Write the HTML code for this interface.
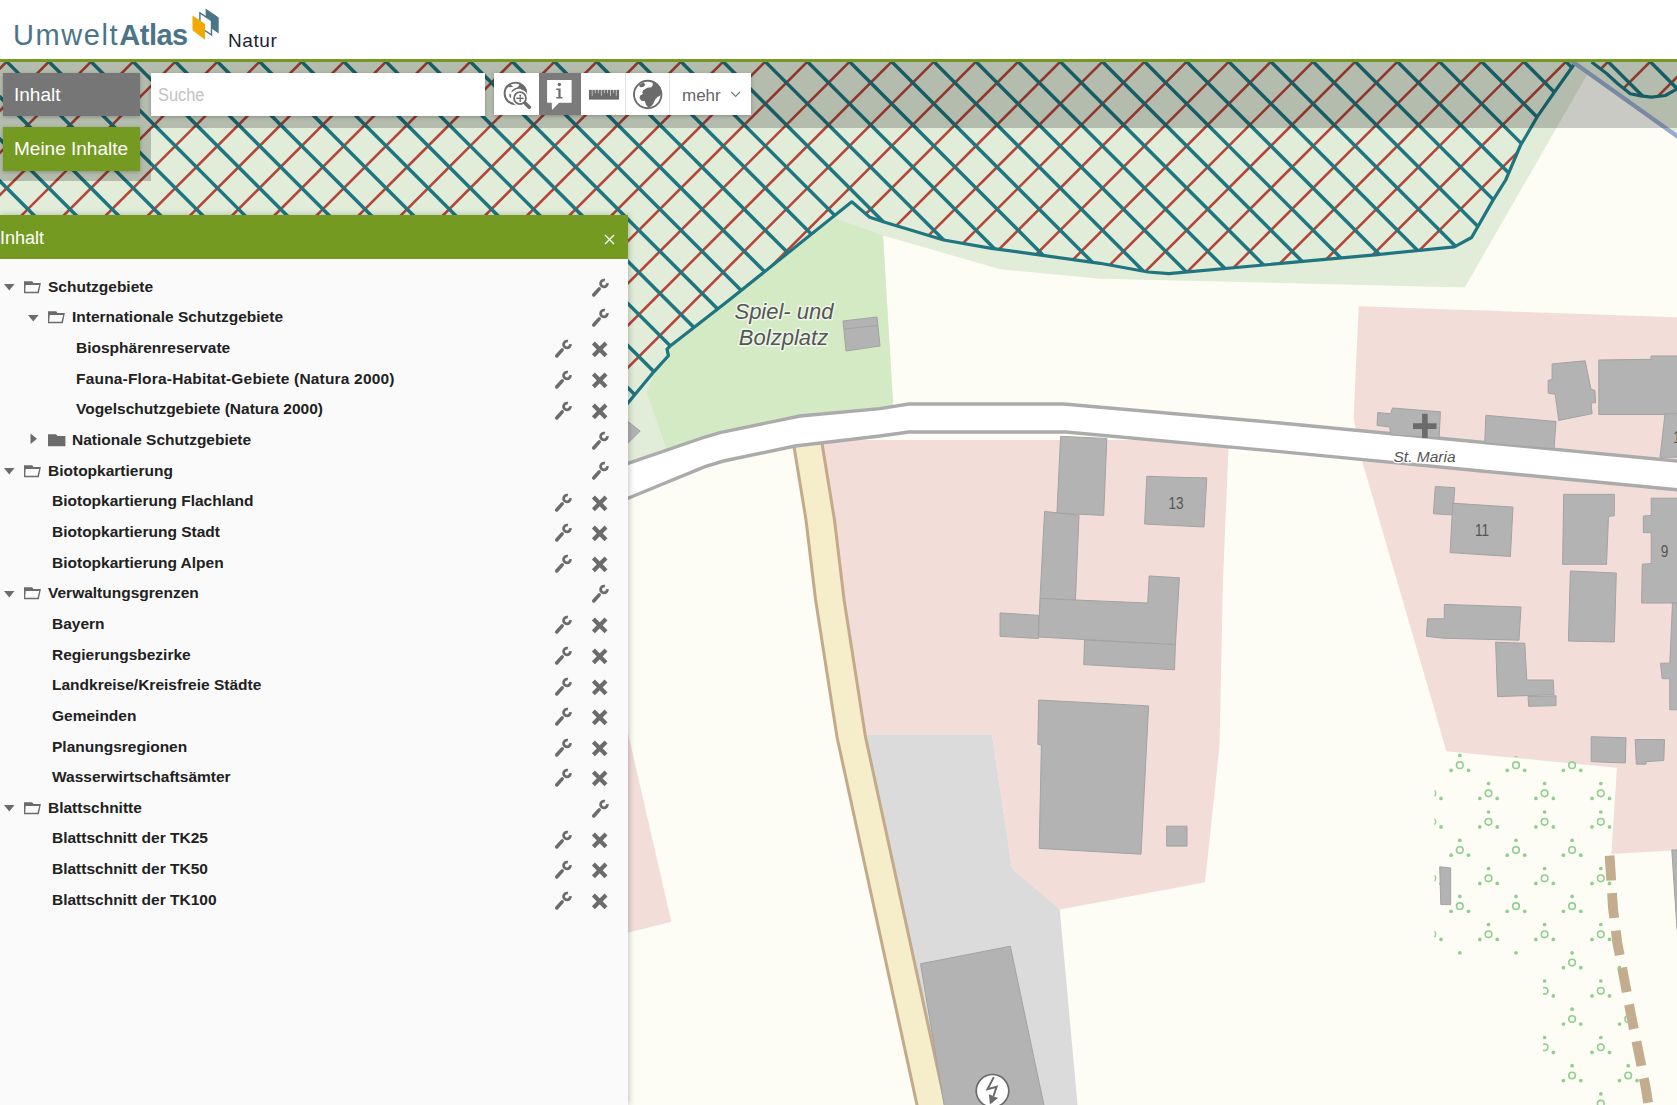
<!DOCTYPE html>
<html><head><meta charset="utf-8">
<style>
html,body{margin:0;padding:0;width:1677px;height:1105px;overflow:hidden;background:#fff;font-family:"Liberation Sans",sans-serif;}
#map{position:absolute;left:0;top:0;}
.tl{stroke:#1f7580;stroke-width:3.5;}
.rl{stroke:#b3453a;stroke-width:2.6;}
#hdr{position:absolute;left:0;top:0;width:1677px;height:59px;background:#fff;}
#hline{position:absolute;left:0;top:59px;width:1677px;height:3px;background:#759a22;}
#band{position:absolute;left:0;top:62px;width:1677px;height:66px;background:rgba(0,0,0,0.2);}
#lband{position:absolute;left:0;top:128px;width:151px;height:53px;background:rgba(0,0,0,0.2);}
.logo{position:absolute;left:13px;top:19px;font-size:29px;color:#4b7488;letter-spacing:0.3px;white-space:nowrap;}
.logo b{font-weight:bold;}
.natur{position:absolute;left:228px;top:29.5px;font-size:19px;letter-spacing:0.6px;color:#1b2434;}
.btn{position:absolute;left:3px;width:137px;height:43px;color:#fff;font-size:19px;box-shadow:0 1px 4px rgba(0,0,0,0.25);}
.btn span{position:absolute;left:11px;top:11px;}
#b1{top:73px;background:#767676;}
#b2{top:127px;height:44px;background:#759a22;}
#search{position:absolute;left:151px;top:73px;width:334px;height:43px;background:#fff;box-shadow:0 1px 4px rgba(0,0,0,0.25);}
#search span{position:absolute;left:7px;top:12px;font-size:18px;color:#c2c2c2;transform:scaleX(0.91);transform-origin:0 0;}
#tools{position:absolute;left:494px;top:73px;width:257px;height:42px;background:#fff;box-shadow:0 1px 4px rgba(0,0,0,0.25);}
.sep{position:absolute;top:0;width:1px;height:42px;background:#e4e4e4;}
#panel{position:absolute;left:0;top:215px;width:628px;height:890px;background:#fafafa;box-shadow:1px 0 6px rgba(0,0,0,0.24);}
#ph{position:absolute;left:0;top:0;width:628px;height:44px;background:#759a22;color:#fff;}
#ph .t{position:absolute;left:0;top:13px;font-size:18px;}
#ph .x{position:absolute;left:604px;top:19px;}
.row{position:absolute;left:0;height:30px;width:628px;}
.row .tx{position:absolute;top:6.8px;font-size:15.5px;font-weight:bold;color:#212121;white-space:nowrap;}
.ic{position:absolute;}
</style></head><body>
<svg id="map" width="1677" height="1105" viewBox="0 0 1677 1105">
<defs>
<clipPath id="c1"><polygon points="-20.0,40.0 1580.0,40.0 1575.8,62.0 1554.3,92.3 1537.3,116.6 1527.1,134.2 1520.4,145.5 1505.7,180.0 1492.3,201.4 1471.6,237.5 1454.4,246.8 1375.0,254.8 1168.8,273.7 1148.0,272.0 1100.0,263.3 991.4,248.3 943.7,240.0 884.0,222.0 869.7,217.3 851.8,201.8 729.2,300.0 669.9,346.3 667.0,349.2 668.4,355.7 654.0,371.6 628.2,402.7 560.0,480.0 -20.0,480.0"/><polygon points="1591.6,62.0 1606.6,73.5 1617.2,83.2 1630.3,93.8 1640.8,95.9 1651.4,97.1 1665.3,95.5 1677.0,88.9 1700.0,78.0 1700.0,40.0 1580.0,40.0"/></clipPath>
<clipPath id="cf"><polygon points="1434.5,749 1617,765 1611,854 1614,910 1622,967 1627,1019 1642,1080 1650,1110 1552,1110 1543,1050 1543,956 1434.5,956"/></clipPath>
</defs>
<rect x="0" y="0" width="1677" height="1105" fill="#fdfdf5"/>
<polygon points="-20.0,40.0 1700.0,40.0 1700.0,149.8 1588.9,71.6 1464.8,287.4 1100.0,278.8 1000.0,269.2 883.0,235.4 894.0,420.0 628.0,480.0 -20.0,520.0" fill="#e1edd9"/>
<polygon points="835.4,218.5 883.0,235.4 894.0,420.0 667.0,450.0 646.7,392.6 654.0,373.5 668.4,357.0 667.0,350.0 669.9,347.5 729.2,301.5 790.0,253.0" fill="#d3eac5"/>
<polygon points="822.0,440.0 1228.0,440.0 1228.5,448.0 1223.0,579.0 1219.5,746.6 1205.0,882.3 1060.4,909.4 1059.7,908.9 1012.0,868.6 992.0,734.8 866.0,734.8 837.0,737.0 815.6,600.0 806.0,520.0 793.6,444.0" fill="#f2ddd8"/>
<polygon points="1358.7,306.3 1677.0,317.2 1700.0,318.0 1700.0,850.0 1677.0,850.3 1611.4,854.0 1616.9,767.8 1446.3,751.3 1431.7,700.0 1363.3,465.0 1353.6,418.4" fill="#f2ddd8"/>
<polygon points="560.0,700.0 628.0,733.0 671.3,921.7 628.0,932.7 560.0,940.0" fill="#f2ddd8"/>
<polygon points="862.0,734.8 992.0,734.8 1012.0,868.6 1059.7,908.9 1078.0,1110.0 944.0,1110.0" fill="#dbdbdb"/>
<g clip-path="url(#c1)">
<line x1="-134.40" y1="-50" x2="-1384.40" y2="1200" class="rl"/>
<line x1="-92.26" y1="-50" x2="-1342.26" y2="1200" class="rl"/>
<line x1="-50.12" y1="-50" x2="-1300.12" y2="1200" class="rl"/>
<line x1="-7.98" y1="-50" x2="-1257.98" y2="1200" class="rl"/>
<line x1="34.16" y1="-50" x2="-1215.84" y2="1200" class="rl"/>
<line x1="76.30" y1="-50" x2="-1173.70" y2="1200" class="rl"/>
<line x1="118.44" y1="-50" x2="-1131.56" y2="1200" class="rl"/>
<line x1="160.58" y1="-50" x2="-1089.42" y2="1200" class="rl"/>
<line x1="202.72" y1="-50" x2="-1047.28" y2="1200" class="rl"/>
<line x1="244.86" y1="-50" x2="-1005.14" y2="1200" class="rl"/>
<line x1="287.00" y1="-50" x2="-963.00" y2="1200" class="rl"/>
<line x1="329.14" y1="-50" x2="-920.86" y2="1200" class="rl"/>
<line x1="371.28" y1="-50" x2="-878.72" y2="1200" class="rl"/>
<line x1="413.42" y1="-50" x2="-836.58" y2="1200" class="rl"/>
<line x1="455.56" y1="-50" x2="-794.44" y2="1200" class="rl"/>
<line x1="497.70" y1="-50" x2="-752.30" y2="1200" class="rl"/>
<line x1="539.84" y1="-50" x2="-710.16" y2="1200" class="rl"/>
<line x1="581.98" y1="-50" x2="-668.02" y2="1200" class="rl"/>
<line x1="624.12" y1="-50" x2="-625.88" y2="1200" class="rl"/>
<line x1="666.26" y1="-50" x2="-583.74" y2="1200" class="rl"/>
<line x1="708.40" y1="-50" x2="-541.60" y2="1200" class="rl"/>
<line x1="750.54" y1="-50" x2="-499.46" y2="1200" class="rl"/>
<line x1="792.68" y1="-50" x2="-457.32" y2="1200" class="rl"/>
<line x1="834.82" y1="-50" x2="-415.18" y2="1200" class="rl"/>
<line x1="876.96" y1="-50" x2="-373.04" y2="1200" class="rl"/>
<line x1="919.10" y1="-50" x2="-330.90" y2="1200" class="rl"/>
<line x1="961.24" y1="-50" x2="-288.76" y2="1200" class="rl"/>
<line x1="1003.38" y1="-50" x2="-246.62" y2="1200" class="rl"/>
<line x1="1045.52" y1="-50" x2="-204.48" y2="1200" class="rl"/>
<line x1="1087.66" y1="-50" x2="-162.34" y2="1200" class="rl"/>
<line x1="1129.80" y1="-50" x2="-120.20" y2="1200" class="rl"/>
<line x1="1171.94" y1="-50" x2="-78.06" y2="1200" class="rl"/>
<line x1="1214.08" y1="-50" x2="-35.92" y2="1200" class="rl"/>
<line x1="1256.22" y1="-50" x2="6.22" y2="1200" class="rl"/>
<line x1="1298.36" y1="-50" x2="48.36" y2="1200" class="rl"/>
<line x1="1340.50" y1="-50" x2="90.50" y2="1200" class="rl"/>
<line x1="1382.64" y1="-50" x2="132.64" y2="1200" class="rl"/>
<line x1="1424.78" y1="-50" x2="174.78" y2="1200" class="rl"/>
<line x1="1466.92" y1="-50" x2="216.92" y2="1200" class="rl"/>
<line x1="1509.06" y1="-50" x2="259.06" y2="1200" class="rl"/>
<line x1="1551.20" y1="-50" x2="301.20" y2="1200" class="rl"/>
<line x1="1593.34" y1="-50" x2="343.34" y2="1200" class="rl"/>
<line x1="1635.48" y1="-50" x2="385.48" y2="1200" class="rl"/>
<line x1="1677.62" y1="-50" x2="427.62" y2="1200" class="rl"/>
<line x1="1719.76" y1="-50" x2="469.76" y2="1200" class="rl"/>
<line x1="1761.90" y1="-50" x2="511.90" y2="1200" class="rl"/>
<line x1="1804.04" y1="-50" x2="554.04" y2="1200" class="rl"/>
<line x1="1846.18" y1="-50" x2="596.18" y2="1200" class="rl"/>
<line x1="1888.32" y1="-50" x2="638.32" y2="1200" class="rl"/>
<line x1="1930.46" y1="-50" x2="680.46" y2="1200" class="rl"/>
<line x1="1972.60" y1="-50" x2="722.60" y2="1200" class="rl"/>
<line x1="2014.74" y1="-50" x2="764.74" y2="1200" class="rl"/>
<line x1="2056.88" y1="-50" x2="806.88" y2="1200" class="rl"/>
<line x1="2099.02" y1="-50" x2="849.02" y2="1200" class="rl"/>
<line x1="2141.16" y1="-50" x2="891.16" y2="1200" class="rl"/>
<line x1="2183.30" y1="-50" x2="933.30" y2="1200" class="rl"/>
<line x1="2225.44" y1="-50" x2="975.44" y2="1200" class="rl"/>
<line x1="2267.58" y1="-50" x2="1017.58" y2="1200" class="rl"/>
<line x1="2309.72" y1="-50" x2="1059.72" y2="1200" class="rl"/>
<line x1="2351.86" y1="-50" x2="1101.86" y2="1200" class="rl"/>
<line x1="2394.00" y1="-50" x2="1144.00" y2="1200" class="rl"/>
<line x1="2436.14" y1="-50" x2="1186.14" y2="1200" class="rl"/>
<line x1="2478.28" y1="-50" x2="1228.28" y2="1200" class="rl"/>
<line x1="2520.42" y1="-50" x2="1270.42" y2="1200" class="rl"/>
<line x1="2562.56" y1="-50" x2="1312.56" y2="1200" class="rl"/>
<line x1="2604.70" y1="-50" x2="1354.70" y2="1200" class="rl"/>
<line x1="2646.84" y1="-50" x2="1396.84" y2="1200" class="rl"/>
<line x1="2688.98" y1="-50" x2="1438.98" y2="1200" class="rl"/>
<line x1="2731.12" y1="-50" x2="1481.12" y2="1200" class="rl"/>
<line x1="2773.26" y1="-50" x2="1523.26" y2="1200" class="rl"/>
<line x1="2815.40" y1="-50" x2="1565.40" y2="1200" class="rl"/>
<line x1="2857.54" y1="-50" x2="1607.54" y2="1200" class="rl"/>
<line x1="2899.68" y1="-50" x2="1649.68" y2="1200" class="rl"/>
<line x1="2941.82" y1="-50" x2="1691.82" y2="1200" class="rl"/>
<line x1="2983.96" y1="-50" x2="1733.96" y2="1200" class="rl"/>
<line x1="3026.10" y1="-50" x2="1776.10" y2="1200" class="rl"/>
<line x1="3068.24" y1="-50" x2="1818.24" y2="1200" class="rl"/>
<line x1="3110.38" y1="-50" x2="1860.38" y2="1200" class="rl"/>
<line x1="3152.52" y1="-50" x2="1902.52" y2="1200" class="rl"/>
<line x1="3194.66" y1="-50" x2="1944.66" y2="1200" class="rl"/>
<line x1="3236.80" y1="-50" x2="1986.80" y2="1200" class="rl"/>
<line x1="3278.94" y1="-50" x2="2028.94" y2="1200" class="rl"/>
<line x1="3321.08" y1="-50" x2="2071.08" y2="1200" class="rl"/>
<line x1="3363.22" y1="-50" x2="2113.22" y2="1200" class="rl"/>
<line x1="3405.36" y1="-50" x2="2155.36" y2="1200" class="rl"/>
<line x1="-1706.20" y1="-50" x2="-456.20" y2="1200" class="tl"/>
<line x1="-1664.06" y1="-50" x2="-414.06" y2="1200" class="tl"/>
<line x1="-1621.92" y1="-50" x2="-371.92" y2="1200" class="tl"/>
<line x1="-1579.78" y1="-50" x2="-329.78" y2="1200" class="tl"/>
<line x1="-1537.64" y1="-50" x2="-287.64" y2="1200" class="tl"/>
<line x1="-1495.50" y1="-50" x2="-245.50" y2="1200" class="tl"/>
<line x1="-1453.36" y1="-50" x2="-203.36" y2="1200" class="tl"/>
<line x1="-1411.22" y1="-50" x2="-161.22" y2="1200" class="tl"/>
<line x1="-1369.08" y1="-50" x2="-119.08" y2="1200" class="tl"/>
<line x1="-1326.94" y1="-50" x2="-76.94" y2="1200" class="tl"/>
<line x1="-1284.80" y1="-50" x2="-34.80" y2="1200" class="tl"/>
<line x1="-1242.66" y1="-50" x2="7.34" y2="1200" class="tl"/>
<line x1="-1200.52" y1="-50" x2="49.48" y2="1200" class="tl"/>
<line x1="-1158.38" y1="-50" x2="91.62" y2="1200" class="tl"/>
<line x1="-1116.24" y1="-50" x2="133.76" y2="1200" class="tl"/>
<line x1="-1074.10" y1="-50" x2="175.90" y2="1200" class="tl"/>
<line x1="-1031.96" y1="-50" x2="218.04" y2="1200" class="tl"/>
<line x1="-989.82" y1="-50" x2="260.18" y2="1200" class="tl"/>
<line x1="-947.68" y1="-50" x2="302.32" y2="1200" class="tl"/>
<line x1="-905.54" y1="-50" x2="344.46" y2="1200" class="tl"/>
<line x1="-863.40" y1="-50" x2="386.60" y2="1200" class="tl"/>
<line x1="-821.26" y1="-50" x2="428.74" y2="1200" class="tl"/>
<line x1="-779.12" y1="-50" x2="470.88" y2="1200" class="tl"/>
<line x1="-736.98" y1="-50" x2="513.02" y2="1200" class="tl"/>
<line x1="-694.84" y1="-50" x2="555.16" y2="1200" class="tl"/>
<line x1="-652.70" y1="-50" x2="597.30" y2="1200" class="tl"/>
<line x1="-610.56" y1="-50" x2="639.44" y2="1200" class="tl"/>
<line x1="-568.42" y1="-50" x2="681.58" y2="1200" class="tl"/>
<line x1="-526.28" y1="-50" x2="723.72" y2="1200" class="tl"/>
<line x1="-484.14" y1="-50" x2="765.86" y2="1200" class="tl"/>
<line x1="-442.00" y1="-50" x2="808.00" y2="1200" class="tl"/>
<line x1="-399.86" y1="-50" x2="850.14" y2="1200" class="tl"/>
<line x1="-357.72" y1="-50" x2="892.28" y2="1200" class="tl"/>
<line x1="-315.58" y1="-50" x2="934.42" y2="1200" class="tl"/>
<line x1="-273.44" y1="-50" x2="976.56" y2="1200" class="tl"/>
<line x1="-231.30" y1="-50" x2="1018.70" y2="1200" class="tl"/>
<line x1="-189.16" y1="-50" x2="1060.84" y2="1200" class="tl"/>
<line x1="-147.02" y1="-50" x2="1102.98" y2="1200" class="tl"/>
<line x1="-104.88" y1="-50" x2="1145.12" y2="1200" class="tl"/>
<line x1="-62.74" y1="-50" x2="1187.26" y2="1200" class="tl"/>
<line x1="-20.60" y1="-50" x2="1229.40" y2="1200" class="tl"/>
<line x1="21.54" y1="-50" x2="1271.54" y2="1200" class="tl"/>
<line x1="63.68" y1="-50" x2="1313.68" y2="1200" class="tl"/>
<line x1="105.82" y1="-50" x2="1355.82" y2="1200" class="tl"/>
<line x1="147.96" y1="-50" x2="1397.96" y2="1200" class="tl"/>
<line x1="190.10" y1="-50" x2="1440.10" y2="1200" class="tl"/>
<line x1="232.24" y1="-50" x2="1482.24" y2="1200" class="tl"/>
<line x1="274.38" y1="-50" x2="1524.38" y2="1200" class="tl"/>
<line x1="316.52" y1="-50" x2="1566.52" y2="1200" class="tl"/>
<line x1="358.66" y1="-50" x2="1608.66" y2="1200" class="tl"/>
<line x1="400.80" y1="-50" x2="1650.80" y2="1200" class="tl"/>
<line x1="442.94" y1="-50" x2="1692.94" y2="1200" class="tl"/>
<line x1="485.08" y1="-50" x2="1735.08" y2="1200" class="tl"/>
<line x1="527.22" y1="-50" x2="1777.22" y2="1200" class="tl"/>
<line x1="569.36" y1="-50" x2="1819.36" y2="1200" class="tl"/>
<line x1="611.50" y1="-50" x2="1861.50" y2="1200" class="tl"/>
<line x1="653.64" y1="-50" x2="1903.64" y2="1200" class="tl"/>
<line x1="695.78" y1="-50" x2="1945.78" y2="1200" class="tl"/>
<line x1="737.92" y1="-50" x2="1987.92" y2="1200" class="tl"/>
<line x1="780.06" y1="-50" x2="2030.06" y2="1200" class="tl"/>
<line x1="822.20" y1="-50" x2="2072.20" y2="1200" class="tl"/>
<line x1="864.34" y1="-50" x2="2114.34" y2="1200" class="tl"/>
<line x1="906.48" y1="-50" x2="2156.48" y2="1200" class="tl"/>
<line x1="948.62" y1="-50" x2="2198.62" y2="1200" class="tl"/>
<line x1="990.76" y1="-50" x2="2240.76" y2="1200" class="tl"/>
<line x1="1032.90" y1="-50" x2="2282.90" y2="1200" class="tl"/>
<line x1="1075.04" y1="-50" x2="2325.04" y2="1200" class="tl"/>
<line x1="1117.18" y1="-50" x2="2367.18" y2="1200" class="tl"/>
<line x1="1159.32" y1="-50" x2="2409.32" y2="1200" class="tl"/>
<line x1="1201.46" y1="-50" x2="2451.46" y2="1200" class="tl"/>
<line x1="1243.60" y1="-50" x2="2493.60" y2="1200" class="tl"/>
<line x1="1285.74" y1="-50" x2="2535.74" y2="1200" class="tl"/>
<line x1="1327.88" y1="-50" x2="2577.88" y2="1200" class="tl"/>
<line x1="1370.02" y1="-50" x2="2620.02" y2="1200" class="tl"/>
<line x1="1412.16" y1="-50" x2="2662.16" y2="1200" class="tl"/>
<line x1="1454.30" y1="-50" x2="2704.30" y2="1200" class="tl"/>
<line x1="1496.44" y1="-50" x2="2746.44" y2="1200" class="tl"/>
<line x1="1538.58" y1="-50" x2="2788.58" y2="1200" class="tl"/>
<line x1="1580.72" y1="-50" x2="2830.72" y2="1200" class="tl"/>
<line x1="1622.86" y1="-50" x2="2872.86" y2="1200" class="tl"/>
<line x1="1665.00" y1="-50" x2="2915.00" y2="1200" class="tl"/>
<line x1="1707.14" y1="-50" x2="2957.14" y2="1200" class="tl"/>
<line x1="1749.28" y1="-50" x2="2999.28" y2="1200" class="tl"/>
<line x1="1791.42" y1="-50" x2="3041.42" y2="1200" class="tl"/>
<line x1="1833.56" y1="-50" x2="3083.56" y2="1200" class="tl"/>
<line x1="1875.70" y1="-50" x2="3125.70" y2="1200" class="tl"/>
<line x1="1917.84" y1="-50" x2="3167.84" y2="1200" class="tl"/>
<line x1="1959.98" y1="-50" x2="3209.98" y2="1200" class="tl"/>
<line x1="2002.12" y1="-50" x2="3252.12" y2="1200" class="tl"/>
<line x1="2044.26" y1="-50" x2="3294.26" y2="1200" class="tl"/>
<line x1="2086.40" y1="-50" x2="3336.40" y2="1200" class="tl"/>
<line x1="2128.54" y1="-50" x2="3378.54" y2="1200" class="tl"/>
<line x1="2170.68" y1="-50" x2="3420.68" y2="1200" class="tl"/>
<line x1="2212.82" y1="-50" x2="3462.82" y2="1200" class="tl"/>
<line x1="2254.96" y1="-50" x2="3504.96" y2="1200" class="tl"/>
<line x1="2297.10" y1="-50" x2="3547.10" y2="1200" class="tl"/>
<line x1="2339.24" y1="-50" x2="3589.24" y2="1200" class="tl"/>
<line x1="2381.38" y1="-50" x2="3631.38" y2="1200" class="tl"/>
<line x1="2423.52" y1="-50" x2="3673.52" y2="1200" class="tl"/>
<line x1="2465.66" y1="-50" x2="3715.66" y2="1200" class="tl"/>
</g>
<polyline points="1575.8,62.0 1554.3,92.3 1537.3,116.6 1527.1,134.2 1520.4,145.5 1505.7,180.0 1492.3,201.4 1471.6,237.5 1454.4,246.8 1375.0,254.8 1168.8,273.7 1148.0,272.0 1100.0,263.3 991.4,248.3 943.7,240.0 884.0,222.0 869.7,217.3 851.8,201.8 729.2,300.0 669.9,346.3 667.0,349.2 668.4,355.7 654.0,371.6 628.2,402.7 560.0,480.0" fill="none" stroke="#1f7580" stroke-width="3.2" stroke-linejoin="round"/>
<polyline points="1591.6,62.0 1606.6,73.5 1617.2,83.2 1630.3,93.8 1640.8,95.9 1651.4,97.1 1665.3,95.5 1677.0,88.9" fill="none" stroke="#1f7580" stroke-width="3.2" stroke-linejoin="round"/>
<line x1="1565" y1="56.3" x2="1700" y2="152.5" stroke="#98abcc" stroke-width="4.3"/>
<polyline points="1609.6,855.6 1610.4,867.6 1613,908.3 1617.3,942.7 1624.2,978.8 1631.2,1016 1638.6,1052 1646,1089.2 1650,1115" fill="none" stroke="#c4ad8f" stroke-width="9.8" stroke-dasharray="25 12.6"/>
<g clip-path="url(#cf)" fill="none" stroke="#8fcf8f">
<circle cx="1459.8" cy="765.2" r="3.3" stroke-width="1.6"/>
<circle cx="1459.8" cy="755.4" r="1.85" fill="#8fcf8f" stroke="none"/>
<circle cx="1451.1" cy="770.3" r="1.85" fill="#8fcf8f" stroke="none"/>
<circle cx="1468.5" cy="770.3" r="1.85" fill="#8fcf8f" stroke="none"/>
<circle cx="1516.0" cy="765.2" r="3.3" stroke-width="1.6"/>
<circle cx="1516.0" cy="755.4" r="1.85" fill="#8fcf8f" stroke="none"/>
<circle cx="1507.2" cy="770.3" r="1.85" fill="#8fcf8f" stroke="none"/>
<circle cx="1524.7" cy="770.3" r="1.85" fill="#8fcf8f" stroke="none"/>
<circle cx="1572.1" cy="765.2" r="3.3" stroke-width="1.6"/>
<circle cx="1572.1" cy="755.4" r="1.85" fill="#8fcf8f" stroke="none"/>
<circle cx="1563.4" cy="770.3" r="1.85" fill="#8fcf8f" stroke="none"/>
<circle cx="1580.8" cy="770.3" r="1.85" fill="#8fcf8f" stroke="none"/>
<circle cx="1628.2" cy="765.2" r="3.3" stroke-width="1.6"/>
<circle cx="1628.2" cy="755.4" r="1.85" fill="#8fcf8f" stroke="none"/>
<circle cx="1619.5" cy="770.3" r="1.85" fill="#8fcf8f" stroke="none"/>
<circle cx="1637.0" cy="770.3" r="1.85" fill="#8fcf8f" stroke="none"/>
<circle cx="1684.4" cy="765.2" r="3.3" stroke-width="1.6"/>
<circle cx="1684.4" cy="755.4" r="1.85" fill="#8fcf8f" stroke="none"/>
<circle cx="1675.7" cy="770.3" r="1.85" fill="#8fcf8f" stroke="none"/>
<circle cx="1693.1" cy="770.3" r="1.85" fill="#8fcf8f" stroke="none"/>
<circle cx="1432.3" cy="793.3" r="3.3" stroke-width="1.6"/>
<circle cx="1432.3" cy="783.5" r="1.85" fill="#8fcf8f" stroke="none"/>
<circle cx="1423.6" cy="798.4" r="1.85" fill="#8fcf8f" stroke="none"/>
<circle cx="1441.0" cy="798.4" r="1.85" fill="#8fcf8f" stroke="none"/>
<circle cx="1488.5" cy="793.3" r="3.3" stroke-width="1.6"/>
<circle cx="1488.5" cy="783.5" r="1.85" fill="#8fcf8f" stroke="none"/>
<circle cx="1479.8" cy="798.4" r="1.85" fill="#8fcf8f" stroke="none"/>
<circle cx="1497.2" cy="798.4" r="1.85" fill="#8fcf8f" stroke="none"/>
<circle cx="1544.6" cy="793.3" r="3.3" stroke-width="1.6"/>
<circle cx="1544.6" cy="783.5" r="1.85" fill="#8fcf8f" stroke="none"/>
<circle cx="1535.9" cy="798.4" r="1.85" fill="#8fcf8f" stroke="none"/>
<circle cx="1553.3" cy="798.4" r="1.85" fill="#8fcf8f" stroke="none"/>
<circle cx="1600.8" cy="793.3" r="3.3" stroke-width="1.6"/>
<circle cx="1600.8" cy="783.5" r="1.85" fill="#8fcf8f" stroke="none"/>
<circle cx="1592.0" cy="798.4" r="1.85" fill="#8fcf8f" stroke="none"/>
<circle cx="1609.5" cy="798.4" r="1.85" fill="#8fcf8f" stroke="none"/>
<circle cx="1656.9" cy="793.3" r="3.3" stroke-width="1.6"/>
<circle cx="1656.9" cy="783.5" r="1.85" fill="#8fcf8f" stroke="none"/>
<circle cx="1648.2" cy="798.4" r="1.85" fill="#8fcf8f" stroke="none"/>
<circle cx="1665.6" cy="798.4" r="1.85" fill="#8fcf8f" stroke="none"/>
<circle cx="1432.3" cy="821.8" r="3.3" stroke-width="1.6"/>
<circle cx="1432.3" cy="812.0" r="1.85" fill="#8fcf8f" stroke="none"/>
<circle cx="1423.6" cy="826.9" r="1.85" fill="#8fcf8f" stroke="none"/>
<circle cx="1441.0" cy="826.9" r="1.85" fill="#8fcf8f" stroke="none"/>
<circle cx="1488.5" cy="821.8" r="3.3" stroke-width="1.6"/>
<circle cx="1488.5" cy="812.0" r="1.85" fill="#8fcf8f" stroke="none"/>
<circle cx="1479.8" cy="826.9" r="1.85" fill="#8fcf8f" stroke="none"/>
<circle cx="1497.2" cy="826.9" r="1.85" fill="#8fcf8f" stroke="none"/>
<circle cx="1544.6" cy="821.8" r="3.3" stroke-width="1.6"/>
<circle cx="1544.6" cy="812.0" r="1.85" fill="#8fcf8f" stroke="none"/>
<circle cx="1535.9" cy="826.9" r="1.85" fill="#8fcf8f" stroke="none"/>
<circle cx="1553.3" cy="826.9" r="1.85" fill="#8fcf8f" stroke="none"/>
<circle cx="1600.8" cy="821.8" r="3.3" stroke-width="1.6"/>
<circle cx="1600.8" cy="812.0" r="1.85" fill="#8fcf8f" stroke="none"/>
<circle cx="1592.0" cy="826.9" r="1.85" fill="#8fcf8f" stroke="none"/>
<circle cx="1609.5" cy="826.9" r="1.85" fill="#8fcf8f" stroke="none"/>
<circle cx="1656.9" cy="821.8" r="3.3" stroke-width="1.6"/>
<circle cx="1656.9" cy="812.0" r="1.85" fill="#8fcf8f" stroke="none"/>
<circle cx="1648.2" cy="826.9" r="1.85" fill="#8fcf8f" stroke="none"/>
<circle cx="1665.6" cy="826.9" r="1.85" fill="#8fcf8f" stroke="none"/>
<circle cx="1459.8" cy="850.1" r="3.3" stroke-width="1.6"/>
<circle cx="1459.8" cy="840.3" r="1.85" fill="#8fcf8f" stroke="none"/>
<circle cx="1451.1" cy="855.2" r="1.85" fill="#8fcf8f" stroke="none"/>
<circle cx="1468.5" cy="855.2" r="1.85" fill="#8fcf8f" stroke="none"/>
<circle cx="1516.0" cy="850.1" r="3.3" stroke-width="1.6"/>
<circle cx="1516.0" cy="840.3" r="1.85" fill="#8fcf8f" stroke="none"/>
<circle cx="1507.2" cy="855.2" r="1.85" fill="#8fcf8f" stroke="none"/>
<circle cx="1524.7" cy="855.2" r="1.85" fill="#8fcf8f" stroke="none"/>
<circle cx="1572.1" cy="850.1" r="3.3" stroke-width="1.6"/>
<circle cx="1572.1" cy="840.3" r="1.85" fill="#8fcf8f" stroke="none"/>
<circle cx="1563.4" cy="855.2" r="1.85" fill="#8fcf8f" stroke="none"/>
<circle cx="1580.8" cy="855.2" r="1.85" fill="#8fcf8f" stroke="none"/>
<circle cx="1628.2" cy="850.1" r="3.3" stroke-width="1.6"/>
<circle cx="1628.2" cy="840.3" r="1.85" fill="#8fcf8f" stroke="none"/>
<circle cx="1619.5" cy="855.2" r="1.85" fill="#8fcf8f" stroke="none"/>
<circle cx="1637.0" cy="855.2" r="1.85" fill="#8fcf8f" stroke="none"/>
<circle cx="1684.4" cy="850.1" r="3.3" stroke-width="1.6"/>
<circle cx="1684.4" cy="840.3" r="1.85" fill="#8fcf8f" stroke="none"/>
<circle cx="1675.7" cy="855.2" r="1.85" fill="#8fcf8f" stroke="none"/>
<circle cx="1693.1" cy="855.2" r="1.85" fill="#8fcf8f" stroke="none"/>
<circle cx="1432.3" cy="878.3" r="3.3" stroke-width="1.6"/>
<circle cx="1432.3" cy="868.5" r="1.85" fill="#8fcf8f" stroke="none"/>
<circle cx="1423.6" cy="883.4" r="1.85" fill="#8fcf8f" stroke="none"/>
<circle cx="1441.0" cy="883.4" r="1.85" fill="#8fcf8f" stroke="none"/>
<circle cx="1488.5" cy="878.3" r="3.3" stroke-width="1.6"/>
<circle cx="1488.5" cy="868.5" r="1.85" fill="#8fcf8f" stroke="none"/>
<circle cx="1479.8" cy="883.4" r="1.85" fill="#8fcf8f" stroke="none"/>
<circle cx="1497.2" cy="883.4" r="1.85" fill="#8fcf8f" stroke="none"/>
<circle cx="1544.6" cy="878.3" r="3.3" stroke-width="1.6"/>
<circle cx="1544.6" cy="868.5" r="1.85" fill="#8fcf8f" stroke="none"/>
<circle cx="1535.9" cy="883.4" r="1.85" fill="#8fcf8f" stroke="none"/>
<circle cx="1553.3" cy="883.4" r="1.85" fill="#8fcf8f" stroke="none"/>
<circle cx="1600.8" cy="878.3" r="3.3" stroke-width="1.6"/>
<circle cx="1600.8" cy="868.5" r="1.85" fill="#8fcf8f" stroke="none"/>
<circle cx="1592.0" cy="883.4" r="1.85" fill="#8fcf8f" stroke="none"/>
<circle cx="1609.5" cy="883.4" r="1.85" fill="#8fcf8f" stroke="none"/>
<circle cx="1656.9" cy="878.3" r="3.3" stroke-width="1.6"/>
<circle cx="1656.9" cy="868.5" r="1.85" fill="#8fcf8f" stroke="none"/>
<circle cx="1648.2" cy="883.4" r="1.85" fill="#8fcf8f" stroke="none"/>
<circle cx="1665.6" cy="883.4" r="1.85" fill="#8fcf8f" stroke="none"/>
<circle cx="1459.8" cy="906.2" r="3.3" stroke-width="1.6"/>
<circle cx="1459.8" cy="896.4" r="1.85" fill="#8fcf8f" stroke="none"/>
<circle cx="1451.1" cy="911.3" r="1.85" fill="#8fcf8f" stroke="none"/>
<circle cx="1468.5" cy="911.3" r="1.85" fill="#8fcf8f" stroke="none"/>
<circle cx="1516.0" cy="906.2" r="3.3" stroke-width="1.6"/>
<circle cx="1516.0" cy="896.4" r="1.85" fill="#8fcf8f" stroke="none"/>
<circle cx="1507.2" cy="911.3" r="1.85" fill="#8fcf8f" stroke="none"/>
<circle cx="1524.7" cy="911.3" r="1.85" fill="#8fcf8f" stroke="none"/>
<circle cx="1572.1" cy="906.2" r="3.3" stroke-width="1.6"/>
<circle cx="1572.1" cy="896.4" r="1.85" fill="#8fcf8f" stroke="none"/>
<circle cx="1563.4" cy="911.3" r="1.85" fill="#8fcf8f" stroke="none"/>
<circle cx="1580.8" cy="911.3" r="1.85" fill="#8fcf8f" stroke="none"/>
<circle cx="1628.2" cy="906.2" r="3.3" stroke-width="1.6"/>
<circle cx="1628.2" cy="896.4" r="1.85" fill="#8fcf8f" stroke="none"/>
<circle cx="1619.5" cy="911.3" r="1.85" fill="#8fcf8f" stroke="none"/>
<circle cx="1637.0" cy="911.3" r="1.85" fill="#8fcf8f" stroke="none"/>
<circle cx="1684.4" cy="906.2" r="3.3" stroke-width="1.6"/>
<circle cx="1684.4" cy="896.4" r="1.85" fill="#8fcf8f" stroke="none"/>
<circle cx="1675.7" cy="911.3" r="1.85" fill="#8fcf8f" stroke="none"/>
<circle cx="1693.1" cy="911.3" r="1.85" fill="#8fcf8f" stroke="none"/>
<circle cx="1432.3" cy="934.3" r="3.3" stroke-width="1.6"/>
<circle cx="1432.3" cy="924.5" r="1.85" fill="#8fcf8f" stroke="none"/>
<circle cx="1423.6" cy="939.4" r="1.85" fill="#8fcf8f" stroke="none"/>
<circle cx="1441.0" cy="939.4" r="1.85" fill="#8fcf8f" stroke="none"/>
<circle cx="1488.5" cy="934.3" r="3.3" stroke-width="1.6"/>
<circle cx="1488.5" cy="924.5" r="1.85" fill="#8fcf8f" stroke="none"/>
<circle cx="1479.8" cy="939.4" r="1.85" fill="#8fcf8f" stroke="none"/>
<circle cx="1497.2" cy="939.4" r="1.85" fill="#8fcf8f" stroke="none"/>
<circle cx="1544.6" cy="934.3" r="3.3" stroke-width="1.6"/>
<circle cx="1544.6" cy="924.5" r="1.85" fill="#8fcf8f" stroke="none"/>
<circle cx="1535.9" cy="939.4" r="1.85" fill="#8fcf8f" stroke="none"/>
<circle cx="1553.3" cy="939.4" r="1.85" fill="#8fcf8f" stroke="none"/>
<circle cx="1600.8" cy="934.3" r="3.3" stroke-width="1.6"/>
<circle cx="1600.8" cy="924.5" r="1.85" fill="#8fcf8f" stroke="none"/>
<circle cx="1592.0" cy="939.4" r="1.85" fill="#8fcf8f" stroke="none"/>
<circle cx="1609.5" cy="939.4" r="1.85" fill="#8fcf8f" stroke="none"/>
<circle cx="1656.9" cy="934.3" r="3.3" stroke-width="1.6"/>
<circle cx="1656.9" cy="924.5" r="1.85" fill="#8fcf8f" stroke="none"/>
<circle cx="1648.2" cy="939.4" r="1.85" fill="#8fcf8f" stroke="none"/>
<circle cx="1665.6" cy="939.4" r="1.85" fill="#8fcf8f" stroke="none"/>
<circle cx="1459.8" cy="962.6" r="3.3" stroke-width="1.6"/>
<circle cx="1459.8" cy="952.8" r="1.85" fill="#8fcf8f" stroke="none"/>
<circle cx="1451.1" cy="967.7" r="1.85" fill="#8fcf8f" stroke="none"/>
<circle cx="1468.5" cy="967.7" r="1.85" fill="#8fcf8f" stroke="none"/>
<circle cx="1516.0" cy="962.6" r="3.3" stroke-width="1.6"/>
<circle cx="1516.0" cy="952.8" r="1.85" fill="#8fcf8f" stroke="none"/>
<circle cx="1507.2" cy="967.7" r="1.85" fill="#8fcf8f" stroke="none"/>
<circle cx="1524.7" cy="967.7" r="1.85" fill="#8fcf8f" stroke="none"/>
<circle cx="1572.1" cy="962.6" r="3.3" stroke-width="1.6"/>
<circle cx="1572.1" cy="952.8" r="1.85" fill="#8fcf8f" stroke="none"/>
<circle cx="1563.4" cy="967.7" r="1.85" fill="#8fcf8f" stroke="none"/>
<circle cx="1580.8" cy="967.7" r="1.85" fill="#8fcf8f" stroke="none"/>
<circle cx="1628.2" cy="962.6" r="3.3" stroke-width="1.6"/>
<circle cx="1628.2" cy="952.8" r="1.85" fill="#8fcf8f" stroke="none"/>
<circle cx="1619.5" cy="967.7" r="1.85" fill="#8fcf8f" stroke="none"/>
<circle cx="1637.0" cy="967.7" r="1.85" fill="#8fcf8f" stroke="none"/>
<circle cx="1684.4" cy="962.6" r="3.3" stroke-width="1.6"/>
<circle cx="1684.4" cy="952.8" r="1.85" fill="#8fcf8f" stroke="none"/>
<circle cx="1675.7" cy="967.7" r="1.85" fill="#8fcf8f" stroke="none"/>
<circle cx="1693.1" cy="967.7" r="1.85" fill="#8fcf8f" stroke="none"/>
<circle cx="1432.3" cy="990.8" r="3.3" stroke-width="1.6"/>
<circle cx="1432.3" cy="981.0" r="1.85" fill="#8fcf8f" stroke="none"/>
<circle cx="1423.6" cy="995.9" r="1.85" fill="#8fcf8f" stroke="none"/>
<circle cx="1441.0" cy="995.9" r="1.85" fill="#8fcf8f" stroke="none"/>
<circle cx="1488.5" cy="990.8" r="3.3" stroke-width="1.6"/>
<circle cx="1488.5" cy="981.0" r="1.85" fill="#8fcf8f" stroke="none"/>
<circle cx="1479.8" cy="995.9" r="1.85" fill="#8fcf8f" stroke="none"/>
<circle cx="1497.2" cy="995.9" r="1.85" fill="#8fcf8f" stroke="none"/>
<circle cx="1544.6" cy="990.8" r="3.3" stroke-width="1.6"/>
<circle cx="1544.6" cy="981.0" r="1.85" fill="#8fcf8f" stroke="none"/>
<circle cx="1535.9" cy="995.9" r="1.85" fill="#8fcf8f" stroke="none"/>
<circle cx="1553.3" cy="995.9" r="1.85" fill="#8fcf8f" stroke="none"/>
<circle cx="1600.8" cy="990.8" r="3.3" stroke-width="1.6"/>
<circle cx="1600.8" cy="981.0" r="1.85" fill="#8fcf8f" stroke="none"/>
<circle cx="1592.0" cy="995.9" r="1.85" fill="#8fcf8f" stroke="none"/>
<circle cx="1609.5" cy="995.9" r="1.85" fill="#8fcf8f" stroke="none"/>
<circle cx="1656.9" cy="990.8" r="3.3" stroke-width="1.6"/>
<circle cx="1656.9" cy="981.0" r="1.85" fill="#8fcf8f" stroke="none"/>
<circle cx="1648.2" cy="995.9" r="1.85" fill="#8fcf8f" stroke="none"/>
<circle cx="1665.6" cy="995.9" r="1.85" fill="#8fcf8f" stroke="none"/>
<circle cx="1459.8" cy="1019.0" r="3.3" stroke-width="1.6"/>
<circle cx="1459.8" cy="1009.2" r="1.85" fill="#8fcf8f" stroke="none"/>
<circle cx="1451.1" cy="1024.1" r="1.85" fill="#8fcf8f" stroke="none"/>
<circle cx="1468.5" cy="1024.1" r="1.85" fill="#8fcf8f" stroke="none"/>
<circle cx="1516.0" cy="1019.0" r="3.3" stroke-width="1.6"/>
<circle cx="1516.0" cy="1009.2" r="1.85" fill="#8fcf8f" stroke="none"/>
<circle cx="1507.2" cy="1024.1" r="1.85" fill="#8fcf8f" stroke="none"/>
<circle cx="1524.7" cy="1024.1" r="1.85" fill="#8fcf8f" stroke="none"/>
<circle cx="1572.1" cy="1019.0" r="3.3" stroke-width="1.6"/>
<circle cx="1572.1" cy="1009.2" r="1.85" fill="#8fcf8f" stroke="none"/>
<circle cx="1563.4" cy="1024.1" r="1.85" fill="#8fcf8f" stroke="none"/>
<circle cx="1580.8" cy="1024.1" r="1.85" fill="#8fcf8f" stroke="none"/>
<circle cx="1628.2" cy="1019.0" r="3.3" stroke-width="1.6"/>
<circle cx="1628.2" cy="1009.2" r="1.85" fill="#8fcf8f" stroke="none"/>
<circle cx="1619.5" cy="1024.1" r="1.85" fill="#8fcf8f" stroke="none"/>
<circle cx="1637.0" cy="1024.1" r="1.85" fill="#8fcf8f" stroke="none"/>
<circle cx="1684.4" cy="1019.0" r="3.3" stroke-width="1.6"/>
<circle cx="1684.4" cy="1009.2" r="1.85" fill="#8fcf8f" stroke="none"/>
<circle cx="1675.7" cy="1024.1" r="1.85" fill="#8fcf8f" stroke="none"/>
<circle cx="1693.1" cy="1024.1" r="1.85" fill="#8fcf8f" stroke="none"/>
<circle cx="1432.3" cy="1047.3" r="3.3" stroke-width="1.6"/>
<circle cx="1432.3" cy="1037.5" r="1.85" fill="#8fcf8f" stroke="none"/>
<circle cx="1423.6" cy="1052.4" r="1.85" fill="#8fcf8f" stroke="none"/>
<circle cx="1441.0" cy="1052.4" r="1.85" fill="#8fcf8f" stroke="none"/>
<circle cx="1488.5" cy="1047.3" r="3.3" stroke-width="1.6"/>
<circle cx="1488.5" cy="1037.5" r="1.85" fill="#8fcf8f" stroke="none"/>
<circle cx="1479.8" cy="1052.4" r="1.85" fill="#8fcf8f" stroke="none"/>
<circle cx="1497.2" cy="1052.4" r="1.85" fill="#8fcf8f" stroke="none"/>
<circle cx="1544.6" cy="1047.3" r="3.3" stroke-width="1.6"/>
<circle cx="1544.6" cy="1037.5" r="1.85" fill="#8fcf8f" stroke="none"/>
<circle cx="1535.9" cy="1052.4" r="1.85" fill="#8fcf8f" stroke="none"/>
<circle cx="1553.3" cy="1052.4" r="1.85" fill="#8fcf8f" stroke="none"/>
<circle cx="1600.8" cy="1047.3" r="3.3" stroke-width="1.6"/>
<circle cx="1600.8" cy="1037.5" r="1.85" fill="#8fcf8f" stroke="none"/>
<circle cx="1592.0" cy="1052.4" r="1.85" fill="#8fcf8f" stroke="none"/>
<circle cx="1609.5" cy="1052.4" r="1.85" fill="#8fcf8f" stroke="none"/>
<circle cx="1656.9" cy="1047.3" r="3.3" stroke-width="1.6"/>
<circle cx="1656.9" cy="1037.5" r="1.85" fill="#8fcf8f" stroke="none"/>
<circle cx="1648.2" cy="1052.4" r="1.85" fill="#8fcf8f" stroke="none"/>
<circle cx="1665.6" cy="1052.4" r="1.85" fill="#8fcf8f" stroke="none"/>
<circle cx="1459.8" cy="1075.5" r="3.3" stroke-width="1.6"/>
<circle cx="1459.8" cy="1065.7" r="1.85" fill="#8fcf8f" stroke="none"/>
<circle cx="1451.1" cy="1080.6" r="1.85" fill="#8fcf8f" stroke="none"/>
<circle cx="1468.5" cy="1080.6" r="1.85" fill="#8fcf8f" stroke="none"/>
<circle cx="1516.0" cy="1075.5" r="3.3" stroke-width="1.6"/>
<circle cx="1516.0" cy="1065.7" r="1.85" fill="#8fcf8f" stroke="none"/>
<circle cx="1507.2" cy="1080.6" r="1.85" fill="#8fcf8f" stroke="none"/>
<circle cx="1524.7" cy="1080.6" r="1.85" fill="#8fcf8f" stroke="none"/>
<circle cx="1572.1" cy="1075.5" r="3.3" stroke-width="1.6"/>
<circle cx="1572.1" cy="1065.7" r="1.85" fill="#8fcf8f" stroke="none"/>
<circle cx="1563.4" cy="1080.6" r="1.85" fill="#8fcf8f" stroke="none"/>
<circle cx="1580.8" cy="1080.6" r="1.85" fill="#8fcf8f" stroke="none"/>
<circle cx="1628.2" cy="1075.5" r="3.3" stroke-width="1.6"/>
<circle cx="1628.2" cy="1065.7" r="1.85" fill="#8fcf8f" stroke="none"/>
<circle cx="1619.5" cy="1080.6" r="1.85" fill="#8fcf8f" stroke="none"/>
<circle cx="1637.0" cy="1080.6" r="1.85" fill="#8fcf8f" stroke="none"/>
<circle cx="1684.4" cy="1075.5" r="3.3" stroke-width="1.6"/>
<circle cx="1684.4" cy="1065.7" r="1.85" fill="#8fcf8f" stroke="none"/>
<circle cx="1675.7" cy="1080.6" r="1.85" fill="#8fcf8f" stroke="none"/>
<circle cx="1693.1" cy="1080.6" r="1.85" fill="#8fcf8f" stroke="none"/>
<circle cx="1432.3" cy="1103.7" r="3.3" stroke-width="1.6"/>
<circle cx="1432.3" cy="1093.9" r="1.85" fill="#8fcf8f" stroke="none"/>
<circle cx="1423.6" cy="1108.8" r="1.85" fill="#8fcf8f" stroke="none"/>
<circle cx="1441.0" cy="1108.8" r="1.85" fill="#8fcf8f" stroke="none"/>
<circle cx="1488.5" cy="1103.7" r="3.3" stroke-width="1.6"/>
<circle cx="1488.5" cy="1093.9" r="1.85" fill="#8fcf8f" stroke="none"/>
<circle cx="1479.8" cy="1108.8" r="1.85" fill="#8fcf8f" stroke="none"/>
<circle cx="1497.2" cy="1108.8" r="1.85" fill="#8fcf8f" stroke="none"/>
<circle cx="1544.6" cy="1103.7" r="3.3" stroke-width="1.6"/>
<circle cx="1544.6" cy="1093.9" r="1.85" fill="#8fcf8f" stroke="none"/>
<circle cx="1535.9" cy="1108.8" r="1.85" fill="#8fcf8f" stroke="none"/>
<circle cx="1553.3" cy="1108.8" r="1.85" fill="#8fcf8f" stroke="none"/>
<circle cx="1600.8" cy="1103.7" r="3.3" stroke-width="1.6"/>
<circle cx="1600.8" cy="1093.9" r="1.85" fill="#8fcf8f" stroke="none"/>
<circle cx="1592.0" cy="1108.8" r="1.85" fill="#8fcf8f" stroke="none"/>
<circle cx="1609.5" cy="1108.8" r="1.85" fill="#8fcf8f" stroke="none"/>
<circle cx="1656.9" cy="1103.7" r="3.3" stroke-width="1.6"/>
<circle cx="1656.9" cy="1093.9" r="1.85" fill="#8fcf8f" stroke="none"/>
<circle cx="1648.2" cy="1108.8" r="1.85" fill="#8fcf8f" stroke="none"/>
<circle cx="1665.6" cy="1108.8" r="1.85" fill="#8fcf8f" stroke="none"/>
</g>
<polygon points="792.5,430.0 793.6,444.0 806.0,520.0 815.6,600.0 837.0,737.0 917.0,1105.0 920.0,1120.0 948.5,1120.0 945.5,1105.0 865.5,737.0 844.1,600.0 834.5,520.0 822.1,444.0 821.0,430.0" fill="#f6edcb"/>
<polyline points="792.5,430.0 793.6,444.0 806.0,520.0 815.6,600.0 837.0,737.0 917.0,1105.0 920.0,1120.0" fill="none" stroke="#c2aa8a" stroke-width="3"/>
<polyline points="821.0,430.0 822.1,444.0 834.5,520.0 844.1,600.0 865.5,737.0 945.5,1105.0 948.5,1120.0" fill="none" stroke="#c2aa8a" stroke-width="3"/>
<polygon points="560.0,488.0 628.0,463.4 705.0,437.0 720.0,432.6 800.0,416.0 880.0,408.6 908.6,404.0 1063.7,404.0 1280.0,423.0 1677.0,461.0 1700.0,463.0 1700.0,492.0 1677.0,489.8 1280.0,451.6 1066.0,432.0 908.6,432.0 880.0,436.0 795.0,446.0 723.5,461.0 705.0,466.6 628.0,498.2 560.0,526.0" fill="#ffffff"/>
<polyline points="560.0,488.0 628.0,463.4 705.0,437.0 720.0,432.6 800.0,416.0 880.0,408.6 908.6,404.0 1063.7,404.0 1280.0,423.0 1677.0,461.0 1700.0,463.0" fill="none" stroke="#ababab" stroke-width="3.4"/>
<polyline points="560.0,526.0 628.0,498.2 705.0,466.6 723.5,461.0 795.0,446.0 880.0,436.0 908.6,432.0 1066.0,432.0 1280.0,451.6 1677.0,489.8 1700.0,492.0" fill="none" stroke="#ababab" stroke-width="3.4"/>
<polygon points="1060.6,436.3 1106.8,438.5 1103.7,515.4 1056.9,513.2" fill="#b3b3b3" stroke="#a3a3a3" stroke-width="1"/>
<polygon points="1044.6,511.4 1079.0,515.4 1075.4,600.0 1040.0,598.5" fill="#b3b3b3" stroke="#a3a3a3" stroke-width="1"/>
<polygon points="1040.0,598.5 1147.7,603.0 1149.2,576.0 1179.4,577.8 1175.4,644.6 1038.5,637.0" fill="#b3b3b3" stroke="#a3a3a3" stroke-width="1"/>
<polygon points="1000.0,612.9 1038.5,615.4 1038.5,638.5 1000.0,636.3" fill="#b3b3b3" stroke="#a3a3a3" stroke-width="1"/>
<polygon points="1084.6,640.0 1175.4,644.6 1174.5,669.8 1083.7,664.6" fill="#b3b3b3" stroke="#a3a3a3" stroke-width="1"/>
<polygon points="1146.8,476.3 1184.6,477.5 1206.8,477.8 1204.0,527.0 1144.6,524.0" fill="#b3b3b3" stroke="#a3a3a3" stroke-width="1"/>
<polygon points="1038.7,700.0 1148.6,705.9 1141.0,854.2 1039.2,848.4 1041.4,745.2 1037.8,744.3" fill="#b3b3b3" stroke="#a3a3a3" stroke-width="1"/>
<polygon points="1166.7,826.2 1187.0,826.2 1187.0,846.1 1166.7,846.1" fill="#b3b3b3" stroke="#a3a3a3" stroke-width="1"/>
<polygon points="920.5,963.8 1010.3,946.2 1045.0,1110.0 945.0,1110.0" fill="#b3b3b3" stroke="#a3a3a3" stroke-width="1"/>
<polygon points="843.0,321.0 877.0,317.0 880.0,346.0 846.0,351.0" fill="#b3b3b3" stroke="#a3a3a3" stroke-width="1"/>
<polygon points="628.0,421.6 640.2,431.0 628.0,443.3 615.0,431.0" fill="#b3b3b3" stroke="#a3a3a3" stroke-width="1"/>
<polygon points="1377.7,412.6 1390.6,413.7 1392.5,408.0 1440.4,411.8 1439.2,437.9 1390.6,434.7 1389.8,427.0 1377.0,425.4" fill="#b3b3b3" stroke="#a3a3a3" stroke-width="1"/>
<polygon points="1485.9,415.3 1556.0,421.5 1554.0,448.8 1484.7,443.0" fill="#b3b3b3" stroke="#a3a3a3" stroke-width="1"/>
<polygon points="1552.1,363.9 1585.1,360.8 1591.0,389.2 1594.9,390.4 1595.6,402.8 1591.0,402.8 1592.1,413.7 1558.7,420.4 1555.2,394.3 1548.2,393.1 1548.2,380.3 1552.1,379.5" fill="#b3b3b3" stroke="#a3a3a3" stroke-width="1"/>
<polygon points="1598.8,360.0 1651.0,359.3 1651.0,356.0 1700.0,356.0 1700.0,414.5 1598.8,414.5" fill="#b3b3b3" stroke="#a3a3a3" stroke-width="1"/>
<polygon points="1665.0,413.7 1700.0,413.7 1700.0,457.3 1660.0,457.3" fill="#b3b3b3" stroke="#a3a3a3" stroke-width="1"/>
<polygon points="1435.3,486.5 1454.8,487.7 1452.8,515.0 1433.4,513.7" fill="#b3b3b3" stroke="#a3a3a3" stroke-width="1"/>
<polygon points="1452.8,503.2 1513.0,507.1 1510.4,556.5 1450.1,552.6" fill="#b3b3b3" stroke="#a3a3a3" stroke-width="1"/>
<polygon points="1563.7,494.3 1614.3,494.3 1614.3,515.7 1608.5,516.5 1606.5,564.3 1562.6,564.3" fill="#b3b3b3" stroke="#a3a3a3" stroke-width="1"/>
<polygon points="1570.4,571.0 1616.3,573.0 1614.3,642.0 1568.4,641.0" fill="#b3b3b3" stroke="#a3a3a3" stroke-width="1"/>
<polygon points="1651.2,498.2 1700.0,498.2 1700.0,603.0 1641.6,603.0 1642.3,564.2 1651.2,563.5 1651.2,532.6 1643.3,532.6 1643.3,516.1 1651.2,515.4" fill="#b3b3b3" stroke="#a3a3a3" stroke-width="1"/>
<polygon points="1672.5,603.0 1700.0,603.0 1700.0,710.0 1669.8,709.7 1669.8,678.7 1662.2,678.7 1660.5,663.2 1669.8,663.2" fill="#b3b3b3" stroke="#a3a3a3" stroke-width="1"/>
<polygon points="1444.3,604.4 1521.0,607.0 1519.0,640.2 1443.0,638.2 1426.4,636.3 1427.5,618.8 1444.3,618.8" fill="#b3b3b3" stroke="#a3a3a3" stroke-width="1"/>
<polygon points="1495.6,642.2 1524.8,643.3 1526.8,680.0 1553.2,680.0 1554.0,694.7 1497.6,696.6" fill="#b3b3b3" stroke="#a3a3a3" stroke-width="1"/>
<polygon points="1528.0,696.6 1556.0,695.8 1556.0,705.6 1528.7,706.3" fill="#b3b3b3" stroke="#a3a3a3" stroke-width="1"/>
<polygon points="1591.2,736.7 1626.0,737.8 1625.3,763.0 1591.2,761.6" fill="#b3b3b3" stroke="#a3a3a3" stroke-width="1"/>
<polygon points="1635.2,739.6 1664.5,739.6 1663.8,760.5 1646.0,761.6 1646.0,764.2 1636.3,764.2" fill="#b3b3b3" stroke="#a3a3a3" stroke-width="1"/>
<polygon points="1439.7,866.8 1450.7,868.0 1450.7,904.6 1440.8,904.6" fill="#b3b3b3" stroke="#a3a3a3" stroke-width="1"/>
<polygon points="1671.8,850.0 1700.0,850.0 1700.0,930.0 1677.0,929.5" fill="#b3b3b3" stroke="#a3a3a3" stroke-width="1"/>
<g font-family="Liberation Sans" font-style="italic" fill="#555" stroke="#eef6ea" stroke-width="3" paint-order="stroke" stroke-linejoin="round">
<text x="784" y="318.9" font-size="22" text-anchor="middle">Spiel- und</text>
<text x="783.5" y="344.7" font-size="22" text-anchor="middle">Bolzplatz</text>
</g>
<line x1="844.1" y1="329" x2="877.6" y2="325.5" stroke="#a3a3a3" stroke-width="1"/>
<text x="1424.5" y="462.3" font-family="Liberation Sans" font-style="italic" font-size="15.5" fill="#555" stroke="#fff" stroke-width="2.5" paint-order="stroke" text-anchor="middle">St. Maria</text>
<path d="M1424.9 413.8V438M1413 426.1H1436.5" stroke="#6b6b6b" stroke-width="5.6"/>
<text x="1176" y="508.6" font-family="Liberation Sans" font-size="16" fill="#555" text-anchor="middle" transform="translate(1176,0) scale(0.85,1) translate(-1176,0)">13</text>
<text x="1482" y="536.5" font-family="Liberation Sans" font-size="16" fill="#555" text-anchor="middle" transform="translate(1482,0) scale(0.85,1) translate(-1482,0)">11</text>
<text x="1664.5" y="557" font-family="Liberation Sans" font-size="16" fill="#555" text-anchor="middle" transform="translate(1664.5,0) scale(0.85,1) translate(-1664.5,0)">9</text>
<text x="1677" y="443" font-family="Liberation Sans" font-size="16" fill="#555" text-anchor="middle" transform="translate(1677,0) scale(0.85,1) translate(-1677,0)">1</text>
<circle cx="992.5" cy="1090.8" r="16.3" fill="#fff" stroke="#6b6b6b" stroke-width="1.7"/>
<path d="M993.8 1077.1L987.5 1089.2L996.7 1086.7L993.5 1096" fill="none" stroke="#6b6b6b" stroke-width="2"/>
<polygon points="988.8,1094.2 998,1098 990,1104.5" fill="#6b6b6b"/>
</svg>
<div id="band"></div>
<div id="lband"></div>
<div id="hdr">
  <div class="logo"><span style="letter-spacing:1.6px">Umwelt</span><b style="letter-spacing:-0.5px">Atlas</b></div>
  <svg style="position:absolute;left:0;top:0" width="240" height="50" viewBox="0 0 240 50">
    <polygon points="205.6,8.4 218.7,17.6 218.7,33.5 205.6,24.3" fill="#4b7488"/>
    <polygon points="199.9,12.8 211.5,20.6 211.5,35 199.9,27.2" fill="#fff" stroke="#4b7488" stroke-width="1.4"/>
    <polygon points="192.5,15.6 205.1,24 204.9,39.8 192.5,30.3" fill="#f2a900"/>
  </svg>
  <div class="natur">Natur</div>
</div>
<div id="hline"></div>
<div class="btn" id="b1"><span>Inhalt</span></div>
<div class="btn" id="b2"><span>Meine Inhalte</span></div>
<div id="search"><span>Suche</span></div>
<div id="tools">
  <div style="position:absolute;left:45px;top:0;width:42px;height:42px;background:#7b7b7b"></div>
  <div class="sep" style="left:131px"></div>
  <div class="sep" style="left:175px"></div>
  <svg style="position:absolute;left:0;top:0" width="257" height="42" viewBox="0 0 257 42">
    <!-- zoom globe -->
    <g fill="#6b6b6b">
      <circle cx="21.4" cy="20.4" r="10.8" fill="none" stroke="#6b6b6b" stroke-width="1.9"/>
      <polygon points="25.08,11 29.38,12.08 32.15,15.77 33.08,19.15 29.69,17.92 26,15.77 22.62,16.08 19.54,17.92 17.38,19.46 18,17.31 20.77,15.15 23.23,14.54 24.77,13"/>
      <polygon points="15.23,21.31 17.08,21 17.08,25.3 15.54,24.08"/>
      <polygon points="13.08,13.92 16.15,11.77 19.23,13.31 17.08,14.23"/>
    </g>
    <circle cx="26" cy="25.15" r="8.3" fill="#fff"/>
    <circle cx="26" cy="25.15" r="5.95" fill="#fff" stroke="#6b6b6b" stroke-width="1.8"/>
    <path d="M22.4 25.3H29.6M26.2 21.7V28.8" stroke="#6b6b6b" stroke-width="1.2"/>
    <path d="M22.3 25.3L23.6 24.2V26.4ZM29.7 25.3L28.4 24.2V26.4ZM26.2 21.6L25.1 22.9H27.3ZM26.2 28.9L25.1 27.6H27.3Z" fill="#6b6b6b"/>
    <path d="M31.7 30.7L35.3 34.3" stroke="#6b6b6b" stroke-width="3.7" stroke-linecap="round"/>
    <!-- info bubble -->
    <polygon points="53.1,7 77.6,7 77.6,29.8 65,29.8 58,37 57.7,29.8 53.1,29.8" fill="#fff"/>
    <circle cx="65.3" cy="11.6" r="1.75" fill="#6b6b6b"/>
    <path d="M64.4 15.6H66.6V24.4H64.4ZM62.3 23.9H68.4V25.5H62.3ZM62.3 15.6H66.6V16.9H62.3Z" fill="#6b6b6b"/>
    <!-- ruler -->
    <rect x="95" y="16.9" width="30.1" height="9.7" fill="#6b6b6b"/>
    <path d="M98.2 16.9V22.8M101.3 16.9V20.2M104.3 16.9V20.2M107.4 16.9V22.8M110.4 16.9V20.2M113.5 16.9V20.2M116.5 16.9V22.8M119.6 16.9V20.2M122.3 16.9V22.8" stroke="#d8d8d8" stroke-width="0.8"/>
    <!-- globe -->
    <circle cx="153.7" cy="21.5" r="13.7" fill="none" stroke="#6b6b6b" stroke-width="1.9"/>
    <polygon fill="#6b6b6b" stroke="#6b6b6b" stroke-width="1.4" stroke-linejoin="round" points="148.92,19.77 149.54,17.92 153.23,15.46 157.54,14.85 159.38,12.69 159.38,9.62 162.77,10.85 166.15,15.15 166.77,19.77 165.54,22.23 163.08,23.46 160.62,25.92 158.77,30.23 156.92,32.69 154.46,33.62 152.62,31.46 151.38,27.46 147.69,27.15 146.15,24.69 147.08,22.54 149.23,21.77 157.54,22.85 157.23,21.62 153.23,21.31 150.46,20.85"/>
    <polygon fill="#6b6b6b" points="144.92,12.08 149.54,9.62 151.38,11.77 149.23,13.92 146.15,14.23"/>
    <!-- chevron -->
    <path d="M237.3 19L241.6 23.4L245.9 19" fill="none" stroke="#777" stroke-width="1.1"/>
  </svg>
  <span style="position:absolute;left:188px;top:13px;font-size:17px;color:#666">mehr</span>
</div>
<div id="panel">
  <div id="ph"><span class="t">Inhalt</span>
    <svg class="x" width="11" height="11" viewBox="0 0 11 11"><path d="M1 1L10 10M10 1L1 10" stroke="#fff" stroke-width="1.3"/></svg>
  </div>
<div class="row" style="top:56.0px"><span class="tx" style="left:48px">Schutzgebiete</span></div>
<svg class="ic" style="left:3.8000000000000007px;top:69.1px" width="12" height="8" viewBox="0 0 12 8"><polygon points="0,0 10.5,0 5.25,6.6" fill="#6b6b6b"/></svg>
<svg class="ic" style="left:24.3px;top:65.8px" width="19" height="14" viewBox="0 0 19 14"><path fill-rule="evenodd" d="M0 0.2H8.1L9.5 1.9L16.9 2.1L14.8 12.2H0ZM1.7 4.1H15.2L13.5 10.8H1.2Z" fill="#6b6b6b"/></svg>
<svg class="ic" style="left:589.5px;top:62.5px" width="20" height="20" viewBox="0 0 20 20"><path d="M3.7 17L9.2 10.8" stroke="#6b6b6b" stroke-width="3.5" stroke-linecap="round"/><path d="M17.39 5.2A3.4 3.4 0 1 1 14.88 2.22" fill="none" stroke="#6b6b6b" stroke-width="2.8"/></svg>
<div class="row" style="top:86.6px"><span class="tx" style="left:72px">Internationale Schutzgebiete</span></div>
<svg class="ic" style="left:27.8px;top:99.7px" width="12" height="8" viewBox="0 0 12 8"><polygon points="0,0 10.5,0 5.25,6.6" fill="#6b6b6b"/></svg>
<svg class="ic" style="left:48.3px;top:96.4px" width="19" height="14" viewBox="0 0 19 14"><path fill-rule="evenodd" d="M0 0.2H8.1L9.5 1.9L16.9 2.1L14.8 12.2H0ZM1.7 4.1H15.2L13.5 10.8H1.2Z" fill="#6b6b6b"/></svg>
<svg class="ic" style="left:589.5px;top:93.1px" width="20" height="20" viewBox="0 0 20 20"><path d="M3.7 17L9.2 10.8" stroke="#6b6b6b" stroke-width="3.5" stroke-linecap="round"/><path d="M17.39 5.2A3.4 3.4 0 1 1 14.88 2.22" fill="none" stroke="#6b6b6b" stroke-width="2.8"/></svg>
<div class="row" style="top:117.3px"><span class="tx" style="left:76px;">Biosphärenreservate</span></div>
<svg class="ic" style="left:553px;top:124.3px" width="20" height="20" viewBox="0 0 20 20"><path d="M3.7 17L9.2 10.8" stroke="#6b6b6b" stroke-width="3.5" stroke-linecap="round"/><path d="M17.39 5.2A3.4 3.4 0 1 1 14.88 2.22" fill="none" stroke="#6b6b6b" stroke-width="2.8"/></svg>
<svg class="ic" style="left:589px;top:124.3px" width="20" height="20" viewBox="0 0 20 20"><path d="M4.4 4L17 16.7M17 4L4.4 16.7" stroke="#6b6b6b" stroke-width="4.2"/></svg>
<div class="row" style="top:147.9px"><span class="tx" style="left:76px;letter-spacing:0.19px;">Fauna-Flora-Habitat-Gebiete (Natura 2000)</span></div>
<svg class="ic" style="left:553px;top:154.9px" width="20" height="20" viewBox="0 0 20 20"><path d="M3.7 17L9.2 10.8" stroke="#6b6b6b" stroke-width="3.5" stroke-linecap="round"/><path d="M17.39 5.2A3.4 3.4 0 1 1 14.88 2.22" fill="none" stroke="#6b6b6b" stroke-width="2.8"/></svg>
<svg class="ic" style="left:589px;top:154.9px" width="20" height="20" viewBox="0 0 20 20"><path d="M4.4 4L17 16.7M17 4L4.4 16.7" stroke="#6b6b6b" stroke-width="4.2"/></svg>
<div class="row" style="top:178.6px"><span class="tx" style="left:76px;">Vogelschutzgebiete (Natura 2000)</span></div>
<svg class="ic" style="left:553px;top:185.6px" width="20" height="20" viewBox="0 0 20 20"><path d="M3.7 17L9.2 10.8" stroke="#6b6b6b" stroke-width="3.5" stroke-linecap="round"/><path d="M17.39 5.2A3.4 3.4 0 1 1 14.88 2.22" fill="none" stroke="#6b6b6b" stroke-width="2.8"/></svg>
<svg class="ic" style="left:589px;top:185.6px" width="20" height="20" viewBox="0 0 20 20"><path d="M4.4 4L17 16.7M17 4L4.4 16.7" stroke="#6b6b6b" stroke-width="4.2"/></svg>
<div class="row" style="top:209.2px"><span class="tx" style="left:72px">Nationale Schutzgebiete</span></div>
<svg class="ic" style="left:30px;top:218.2px" width="8" height="12" viewBox="0 0 8 12"><polygon points="0.5,0.5 7,5.75 0.5,11" fill="#6b6b6b"/></svg>
<svg class="ic" style="left:48.3px;top:219.1px" width="19" height="14" viewBox="0 0 19 14"><path d="M0 0.2H8.1L9.5 1.9H17.4V12.2H0Z" fill="#6b6b6b"/></svg>
<svg class="ic" style="left:589.5px;top:215.8px" width="20" height="20" viewBox="0 0 20 20"><path d="M3.7 17L9.2 10.8" stroke="#6b6b6b" stroke-width="3.5" stroke-linecap="round"/><path d="M17.39 5.2A3.4 3.4 0 1 1 14.88 2.22" fill="none" stroke="#6b6b6b" stroke-width="2.8"/></svg>
<div class="row" style="top:239.9px"><span class="tx" style="left:48px">Biotopkartierung</span></div>
<svg class="ic" style="left:3.8000000000000007px;top:253.0px" width="12" height="8" viewBox="0 0 12 8"><polygon points="0,0 10.5,0 5.25,6.6" fill="#6b6b6b"/></svg>
<svg class="ic" style="left:24.3px;top:249.7px" width="19" height="14" viewBox="0 0 19 14"><path fill-rule="evenodd" d="M0 0.2H8.1L9.5 1.9L16.9 2.1L14.8 12.2H0ZM1.7 4.1H15.2L13.5 10.8H1.2Z" fill="#6b6b6b"/></svg>
<svg class="ic" style="left:589.5px;top:246.4px" width="20" height="20" viewBox="0 0 20 20"><path d="M3.7 17L9.2 10.8" stroke="#6b6b6b" stroke-width="3.5" stroke-linecap="round"/><path d="M17.39 5.2A3.4 3.4 0 1 1 14.88 2.22" fill="none" stroke="#6b6b6b" stroke-width="2.8"/></svg>
<div class="row" style="top:270.5px"><span class="tx" style="left:52px;">Biotopkartierung Flachland</span></div>
<svg class="ic" style="left:553px;top:277.5px" width="20" height="20" viewBox="0 0 20 20"><path d="M3.7 17L9.2 10.8" stroke="#6b6b6b" stroke-width="3.5" stroke-linecap="round"/><path d="M17.39 5.2A3.4 3.4 0 1 1 14.88 2.22" fill="none" stroke="#6b6b6b" stroke-width="2.8"/></svg>
<svg class="ic" style="left:589px;top:277.5px" width="20" height="20" viewBox="0 0 20 20"><path d="M4.4 4L17 16.7M17 4L4.4 16.7" stroke="#6b6b6b" stroke-width="4.2"/></svg>
<div class="row" style="top:301.2px"><span class="tx" style="left:52px;">Biotopkartierung Stadt</span></div>
<svg class="ic" style="left:553px;top:308.2px" width="20" height="20" viewBox="0 0 20 20"><path d="M3.7 17L9.2 10.8" stroke="#6b6b6b" stroke-width="3.5" stroke-linecap="round"/><path d="M17.39 5.2A3.4 3.4 0 1 1 14.88 2.22" fill="none" stroke="#6b6b6b" stroke-width="2.8"/></svg>
<svg class="ic" style="left:589px;top:308.2px" width="20" height="20" viewBox="0 0 20 20"><path d="M4.4 4L17 16.7M17 4L4.4 16.7" stroke="#6b6b6b" stroke-width="4.2"/></svg>
<div class="row" style="top:331.8px"><span class="tx" style="left:52px;">Biotopkartierung Alpen</span></div>
<svg class="ic" style="left:553px;top:338.8px" width="20" height="20" viewBox="0 0 20 20"><path d="M3.7 17L9.2 10.8" stroke="#6b6b6b" stroke-width="3.5" stroke-linecap="round"/><path d="M17.39 5.2A3.4 3.4 0 1 1 14.88 2.22" fill="none" stroke="#6b6b6b" stroke-width="2.8"/></svg>
<svg class="ic" style="left:589px;top:338.8px" width="20" height="20" viewBox="0 0 20 20"><path d="M4.4 4L17 16.7M17 4L4.4 16.7" stroke="#6b6b6b" stroke-width="4.2"/></svg>
<div class="row" style="top:362.5px"><span class="tx" style="left:48px">Verwaltungsgrenzen</span></div>
<svg class="ic" style="left:3.8000000000000007px;top:375.6px" width="12" height="8" viewBox="0 0 12 8"><polygon points="0,0 10.5,0 5.25,6.6" fill="#6b6b6b"/></svg>
<svg class="ic" style="left:24.3px;top:372.3px" width="19" height="14" viewBox="0 0 19 14"><path fill-rule="evenodd" d="M0 0.2H8.1L9.5 1.9L16.9 2.1L14.8 12.2H0ZM1.7 4.1H15.2L13.5 10.8H1.2Z" fill="#6b6b6b"/></svg>
<svg class="ic" style="left:589.5px;top:369.0px" width="20" height="20" viewBox="0 0 20 20"><path d="M3.7 17L9.2 10.8" stroke="#6b6b6b" stroke-width="3.5" stroke-linecap="round"/><path d="M17.39 5.2A3.4 3.4 0 1 1 14.88 2.22" fill="none" stroke="#6b6b6b" stroke-width="2.8"/></svg>
<div class="row" style="top:393.1px"><span class="tx" style="left:52px;">Bayern</span></div>
<svg class="ic" style="left:553px;top:400.1px" width="20" height="20" viewBox="0 0 20 20"><path d="M3.7 17L9.2 10.8" stroke="#6b6b6b" stroke-width="3.5" stroke-linecap="round"/><path d="M17.39 5.2A3.4 3.4 0 1 1 14.88 2.22" fill="none" stroke="#6b6b6b" stroke-width="2.8"/></svg>
<svg class="ic" style="left:589px;top:400.1px" width="20" height="20" viewBox="0 0 20 20"><path d="M4.4 4L17 16.7M17 4L4.4 16.7" stroke="#6b6b6b" stroke-width="4.2"/></svg>
<div class="row" style="top:423.8px"><span class="tx" style="left:52px;">Regierungsbezirke</span></div>
<svg class="ic" style="left:553px;top:430.8px" width="20" height="20" viewBox="0 0 20 20"><path d="M3.7 17L9.2 10.8" stroke="#6b6b6b" stroke-width="3.5" stroke-linecap="round"/><path d="M17.39 5.2A3.4 3.4 0 1 1 14.88 2.22" fill="none" stroke="#6b6b6b" stroke-width="2.8"/></svg>
<svg class="ic" style="left:589px;top:430.8px" width="20" height="20" viewBox="0 0 20 20"><path d="M4.4 4L17 16.7M17 4L4.4 16.7" stroke="#6b6b6b" stroke-width="4.2"/></svg>
<div class="row" style="top:454.5px"><span class="tx" style="left:52px;">Landkreise/Kreisfreie Städte</span></div>
<svg class="ic" style="left:553px;top:461.5px" width="20" height="20" viewBox="0 0 20 20"><path d="M3.7 17L9.2 10.8" stroke="#6b6b6b" stroke-width="3.5" stroke-linecap="round"/><path d="M17.39 5.2A3.4 3.4 0 1 1 14.88 2.22" fill="none" stroke="#6b6b6b" stroke-width="2.8"/></svg>
<svg class="ic" style="left:589px;top:461.5px" width="20" height="20" viewBox="0 0 20 20"><path d="M4.4 4L17 16.7M17 4L4.4 16.7" stroke="#6b6b6b" stroke-width="4.2"/></svg>
<div class="row" style="top:485.1px"><span class="tx" style="left:52px;">Gemeinden</span></div>
<svg class="ic" style="left:553px;top:492.1px" width="20" height="20" viewBox="0 0 20 20"><path d="M3.7 17L9.2 10.8" stroke="#6b6b6b" stroke-width="3.5" stroke-linecap="round"/><path d="M17.39 5.2A3.4 3.4 0 1 1 14.88 2.22" fill="none" stroke="#6b6b6b" stroke-width="2.8"/></svg>
<svg class="ic" style="left:589px;top:492.1px" width="20" height="20" viewBox="0 0 20 20"><path d="M4.4 4L17 16.7M17 4L4.4 16.7" stroke="#6b6b6b" stroke-width="4.2"/></svg>
<div class="row" style="top:515.8px"><span class="tx" style="left:52px;">Planungsregionen</span></div>
<svg class="ic" style="left:553px;top:522.8px" width="20" height="20" viewBox="0 0 20 20"><path d="M3.7 17L9.2 10.8" stroke="#6b6b6b" stroke-width="3.5" stroke-linecap="round"/><path d="M17.39 5.2A3.4 3.4 0 1 1 14.88 2.22" fill="none" stroke="#6b6b6b" stroke-width="2.8"/></svg>
<svg class="ic" style="left:589px;top:522.8px" width="20" height="20" viewBox="0 0 20 20"><path d="M4.4 4L17 16.7M17 4L4.4 16.7" stroke="#6b6b6b" stroke-width="4.2"/></svg>
<div class="row" style="top:546.4px"><span class="tx" style="left:52px;">Wasserwirtschaftsämter</span></div>
<svg class="ic" style="left:553px;top:553.4px" width="20" height="20" viewBox="0 0 20 20"><path d="M3.7 17L9.2 10.8" stroke="#6b6b6b" stroke-width="3.5" stroke-linecap="round"/><path d="M17.39 5.2A3.4 3.4 0 1 1 14.88 2.22" fill="none" stroke="#6b6b6b" stroke-width="2.8"/></svg>
<svg class="ic" style="left:589px;top:553.4px" width="20" height="20" viewBox="0 0 20 20"><path d="M4.4 4L17 16.7M17 4L4.4 16.7" stroke="#6b6b6b" stroke-width="4.2"/></svg>
<div class="row" style="top:577.0px"><span class="tx" style="left:48px">Blattschnitte</span></div>
<svg class="ic" style="left:3.8000000000000007px;top:590.1px" width="12" height="8" viewBox="0 0 12 8"><polygon points="0,0 10.5,0 5.25,6.6" fill="#6b6b6b"/></svg>
<svg class="ic" style="left:24.3px;top:586.8px" width="19" height="14" viewBox="0 0 19 14"><path fill-rule="evenodd" d="M0 0.2H8.1L9.5 1.9L16.9 2.1L14.8 12.2H0ZM1.7 4.1H15.2L13.5 10.8H1.2Z" fill="#6b6b6b"/></svg>
<svg class="ic" style="left:589.5px;top:583.5px" width="20" height="20" viewBox="0 0 20 20"><path d="M3.7 17L9.2 10.8" stroke="#6b6b6b" stroke-width="3.5" stroke-linecap="round"/><path d="M17.39 5.2A3.4 3.4 0 1 1 14.88 2.22" fill="none" stroke="#6b6b6b" stroke-width="2.8"/></svg>
<div class="row" style="top:607.7px"><span class="tx" style="left:52px;">Blattschnitt der TK25</span></div>
<svg class="ic" style="left:553px;top:614.7px" width="20" height="20" viewBox="0 0 20 20"><path d="M3.7 17L9.2 10.8" stroke="#6b6b6b" stroke-width="3.5" stroke-linecap="round"/><path d="M17.39 5.2A3.4 3.4 0 1 1 14.88 2.22" fill="none" stroke="#6b6b6b" stroke-width="2.8"/></svg>
<svg class="ic" style="left:589px;top:614.7px" width="20" height="20" viewBox="0 0 20 20"><path d="M4.4 4L17 16.7M17 4L4.4 16.7" stroke="#6b6b6b" stroke-width="4.2"/></svg>
<div class="row" style="top:638.4px"><span class="tx" style="left:52px;">Blattschnitt der TK50</span></div>
<svg class="ic" style="left:553px;top:645.4px" width="20" height="20" viewBox="0 0 20 20"><path d="M3.7 17L9.2 10.8" stroke="#6b6b6b" stroke-width="3.5" stroke-linecap="round"/><path d="M17.39 5.2A3.4 3.4 0 1 1 14.88 2.22" fill="none" stroke="#6b6b6b" stroke-width="2.8"/></svg>
<svg class="ic" style="left:589px;top:645.4px" width="20" height="20" viewBox="0 0 20 20"><path d="M4.4 4L17 16.7M17 4L4.4 16.7" stroke="#6b6b6b" stroke-width="4.2"/></svg>
<div class="row" style="top:669.0px"><span class="tx" style="left:52px;">Blattschnitt der TK100</span></div>
<svg class="ic" style="left:553px;top:676.0px" width="20" height="20" viewBox="0 0 20 20"><path d="M3.7 17L9.2 10.8" stroke="#6b6b6b" stroke-width="3.5" stroke-linecap="round"/><path d="M17.39 5.2A3.4 3.4 0 1 1 14.88 2.22" fill="none" stroke="#6b6b6b" stroke-width="2.8"/></svg>
<svg class="ic" style="left:589px;top:676.0px" width="20" height="20" viewBox="0 0 20 20"><path d="M4.4 4L17 16.7M17 4L4.4 16.7" stroke="#6b6b6b" stroke-width="4.2"/></svg>
</div>
</body></html>
